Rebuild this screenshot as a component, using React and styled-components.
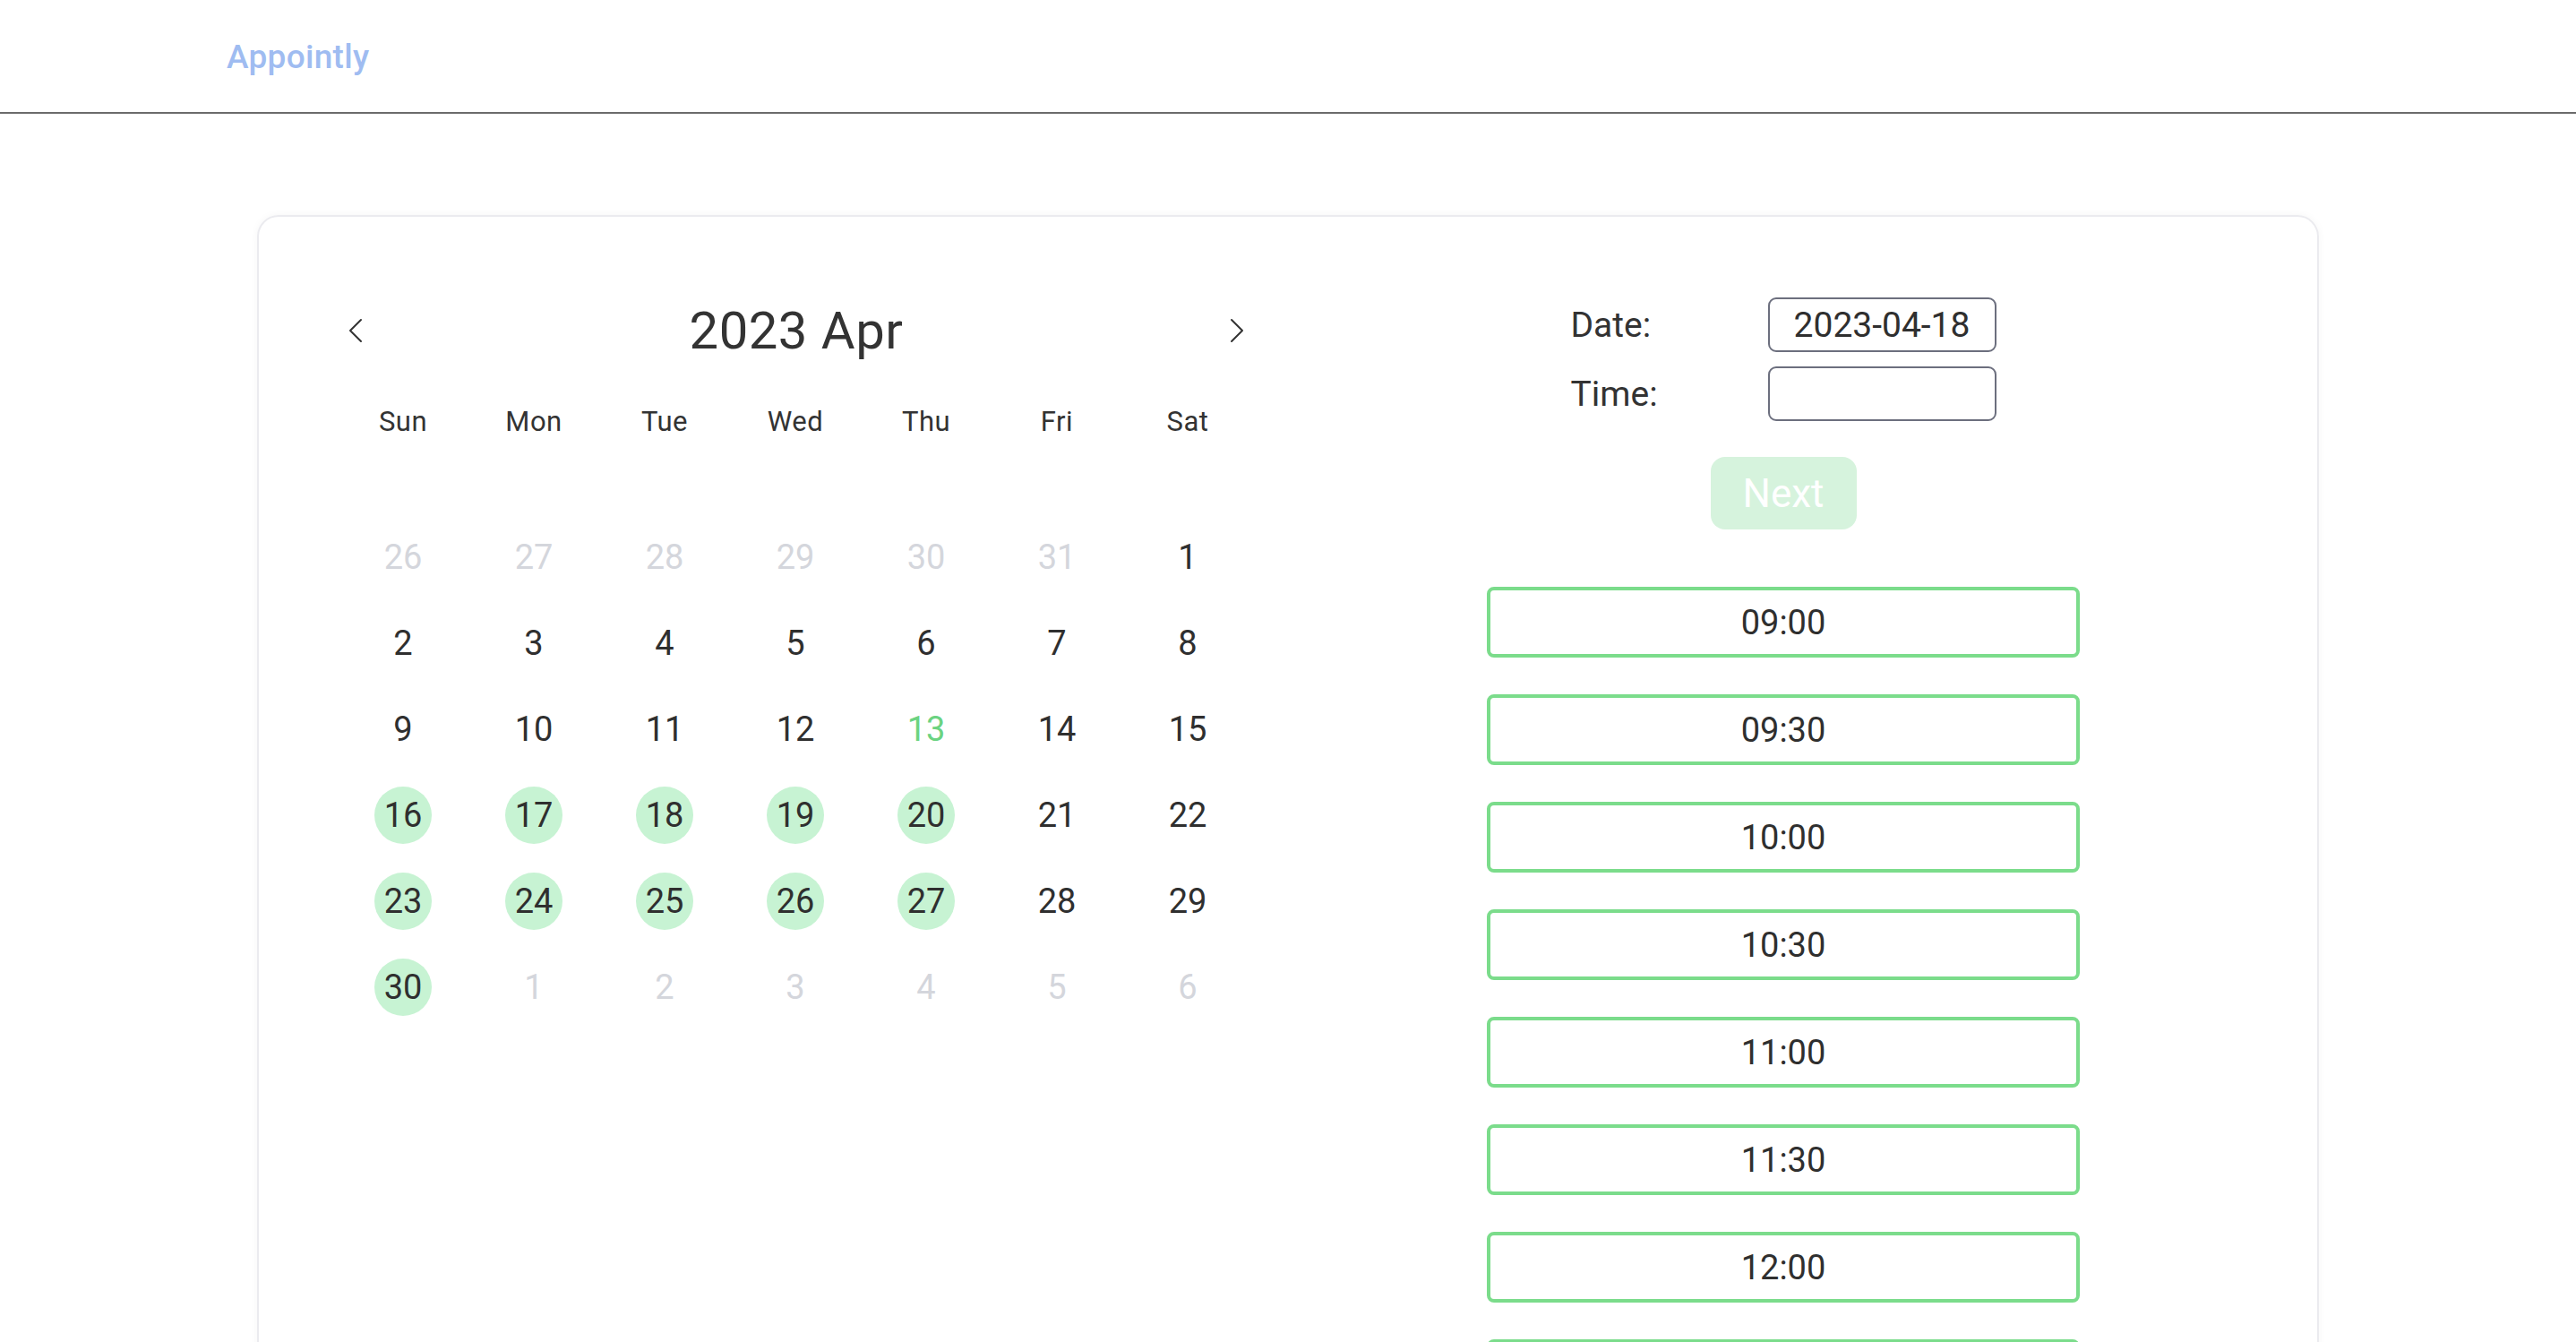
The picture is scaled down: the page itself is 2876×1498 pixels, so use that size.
import React from "react";
import styled, { createGlobalStyle } from "styled-components";

const Global = createGlobalStyle`
  * { box-sizing: border-box; }
  body { margin: 0; background: #fff; font-family: Roboto, "Noto Sans", sans-serif; color: #333; }
`;

const Header = styled.header`
  height: 127px;
  border-bottom: 2px solid #6b6b6b;
  display: flex;
  align-items: center;
  padding-left: 253px;
`;

const Logo = styled.div`
  font-family: Roboto, sans-serif;
  font-weight: 500;
  font-size: 37px;
  color: #9fbcf1;
  letter-spacing: 0.3px;
  margin-top: 2px;
`;

const Card = styled.main`
  width: 2302px;
  margin: 113px auto 0;
  border: 2px solid #ebebef;
  border-radius: 24px;
  box-shadow: 0 0 10px rgba(0, 0, 0, 0.04);
  padding: 90px 0 120px 88px;
  display: grid;
  grid-template-columns: 1022px 662px;
  column-gap: 261px;
  align-items: start;
`;

const Calendar = styled.section`
  display: flex;
  flex-direction: column;
`;

const CalHead = styled.div`
  height: 74px;
  display: flex;
  align-items: center;
  justify-content: space-between;
  padding: 0 10px 0 12px;
`;

const NavBtn = styled.button`
  border: none;
  background: none;
  padding: 0;
  width: 16px;
  height: 28px;
  display: flex;
  align-items: center;
  justify-content: center;
  cursor: pointer;
`;

const Title = styled.h2`
  margin: 0;
  font-weight: 400;
  font-size: 58px;
  color: #333;
  letter-spacing: 0.5px;
`;

const Grid = styled.div`
  display: grid;
  grid-template-columns: repeat(7, 146px);
`;

const WeekRow = styled(Grid)`
  margin-top: 32px;
  height: 64px;
  margin-bottom: 72px;
`;

const WeekDay = styled.div`
  display: flex;
  align-items: center;
  justify-content: center;
  font-size: 31px;
  letter-spacing: 0.5px;
  color: #333;
`;

const DayCell = styled.div`
  height: 96px;
  display: flex;
  align-items: center;
  justify-content: center;
`;

const Day = styled.span`
  width: 64px;
  height: 64px;
  border-radius: 50%;
  display: flex;
  align-items: center;
  justify-content: center;
  font-size: 38px;
  background: ${(p) => (p.$avail ? "#c7f3d3" : "transparent")};
  color: ${(p) => (p.$muted ? "#d4d6dc" : p.$today ? "#6bd381" : "#2f2f2f")};
`;

const Side = styled.section`
  display: flex;
  flex-direction: column;
  align-items: center;
`;

const Form = styled.div`
  display: grid;
  grid-template-columns: 220px 255px;
  row-gap: 16px;
  align-items: center;
`;

const Label = styled.label`
  font-size: 39px;
  color: #333;
`;

const Field = styled.div`
  height: 61px;
  border: 2px solid #6c6f7e;
  border-radius: 9px;
  display: flex;
  align-items: center;
  justify-content: center;
  font-size: 39px;
  color: #2f2f2f;
`;

const NextBtn = styled.button`
  margin-top: 40px;
  width: 163px;
  height: 81px;
  border: none;
  border-radius: 16px;
  background: #d6f3dd;
  color: #fff;
  font-family: Roboto, sans-serif;
  font-size: 44px;
`;

const Slots = styled.div`
  margin-top: 64px;
  width: 662px;
  display: flex;
  flex-direction: column;
  gap: 41px;
`;

const Slot = styled.button`
  height: 79px;
  border: 4px solid #7bdc8b;
  border-radius: 8px;
  background: #fff;
  font-family: Roboto, sans-serif;
  font-size: 38px;
  color: #2f2f2f;
`;

const Chevron = ({ dir }) => (
  <svg width="16" height="28" viewBox="0 0 16 28" fill="none">
    <path
      d={dir === "left" ? "M14 2 L2 14 L14 26" : "M2 2 L14 14 L2 26"}
      stroke="#333"
      strokeWidth="2"
      strokeLinecap="round"
      strokeLinejoin="round"
    />
  </svg>
);

const weekdays = ["Sun", "Mon", "Tue", "Wed", "Thu", "Fri", "Sat"];

const days = [
  ...[26, 27, 28, 29, 30, 31].map((d) => ({ d, muted: true })),
  ...Array.from({ length: 30 }, (_, i) => {
    const d = i + 1;
    const dow = (d + 5) % 7; // Apr 1 2023 is Saturday
    return {
      d,
      today: d === 13,
      avail: d >= 16 && dow >= 0 && dow <= 4,
    };
  }),
  ...[1, 2, 3, 4, 5, 6].map((d) => ({ d, muted: true })),
];

const slots = [
  "09:00", "09:30", "10:00", "10:30", "11:00", "11:30", "12:00", "12:30",
  "13:00", "13:30", "14:00", "14:30", "15:00", "15:30", "16:00", "16:30",
];

export default function App() {
  return (
    <>
      <Global />
      <Header>
        <Logo>Appointly</Logo>
      </Header>
      <Card>
        <Calendar>
          <CalHead>
            <NavBtn aria-label="previous"><Chevron dir="left" /></NavBtn>
            <Title>2023 Apr</Title>
            <NavBtn aria-label="next"><Chevron dir="right" /></NavBtn>
          </CalHead>
          <WeekRow>
            {weekdays.map((w) => (
              <WeekDay key={w}>{w}</WeekDay>
            ))}
          </WeekRow>
          <Grid>
            {days.map((x, i) => (
              <DayCell key={i}>
                <Day $muted={x.muted} $today={x.today} $avail={x.avail}>
                  {x.d}
                </Day>
              </DayCell>
            ))}
          </Grid>
        </Calendar>
        <Side>
          <Form>
            <Label>Date:</Label>
            <Field>2023-04-18</Field>
            <Label>Time:</Label>
            <Field />
          </Form>
          <NextBtn>Next</NextBtn>
          <Slots>
            {slots.map((s) => (
              <Slot key={s}>{s}</Slot>
            ))}
          </Slots>
        </Side>
      </Card>
    </>
  );
}
